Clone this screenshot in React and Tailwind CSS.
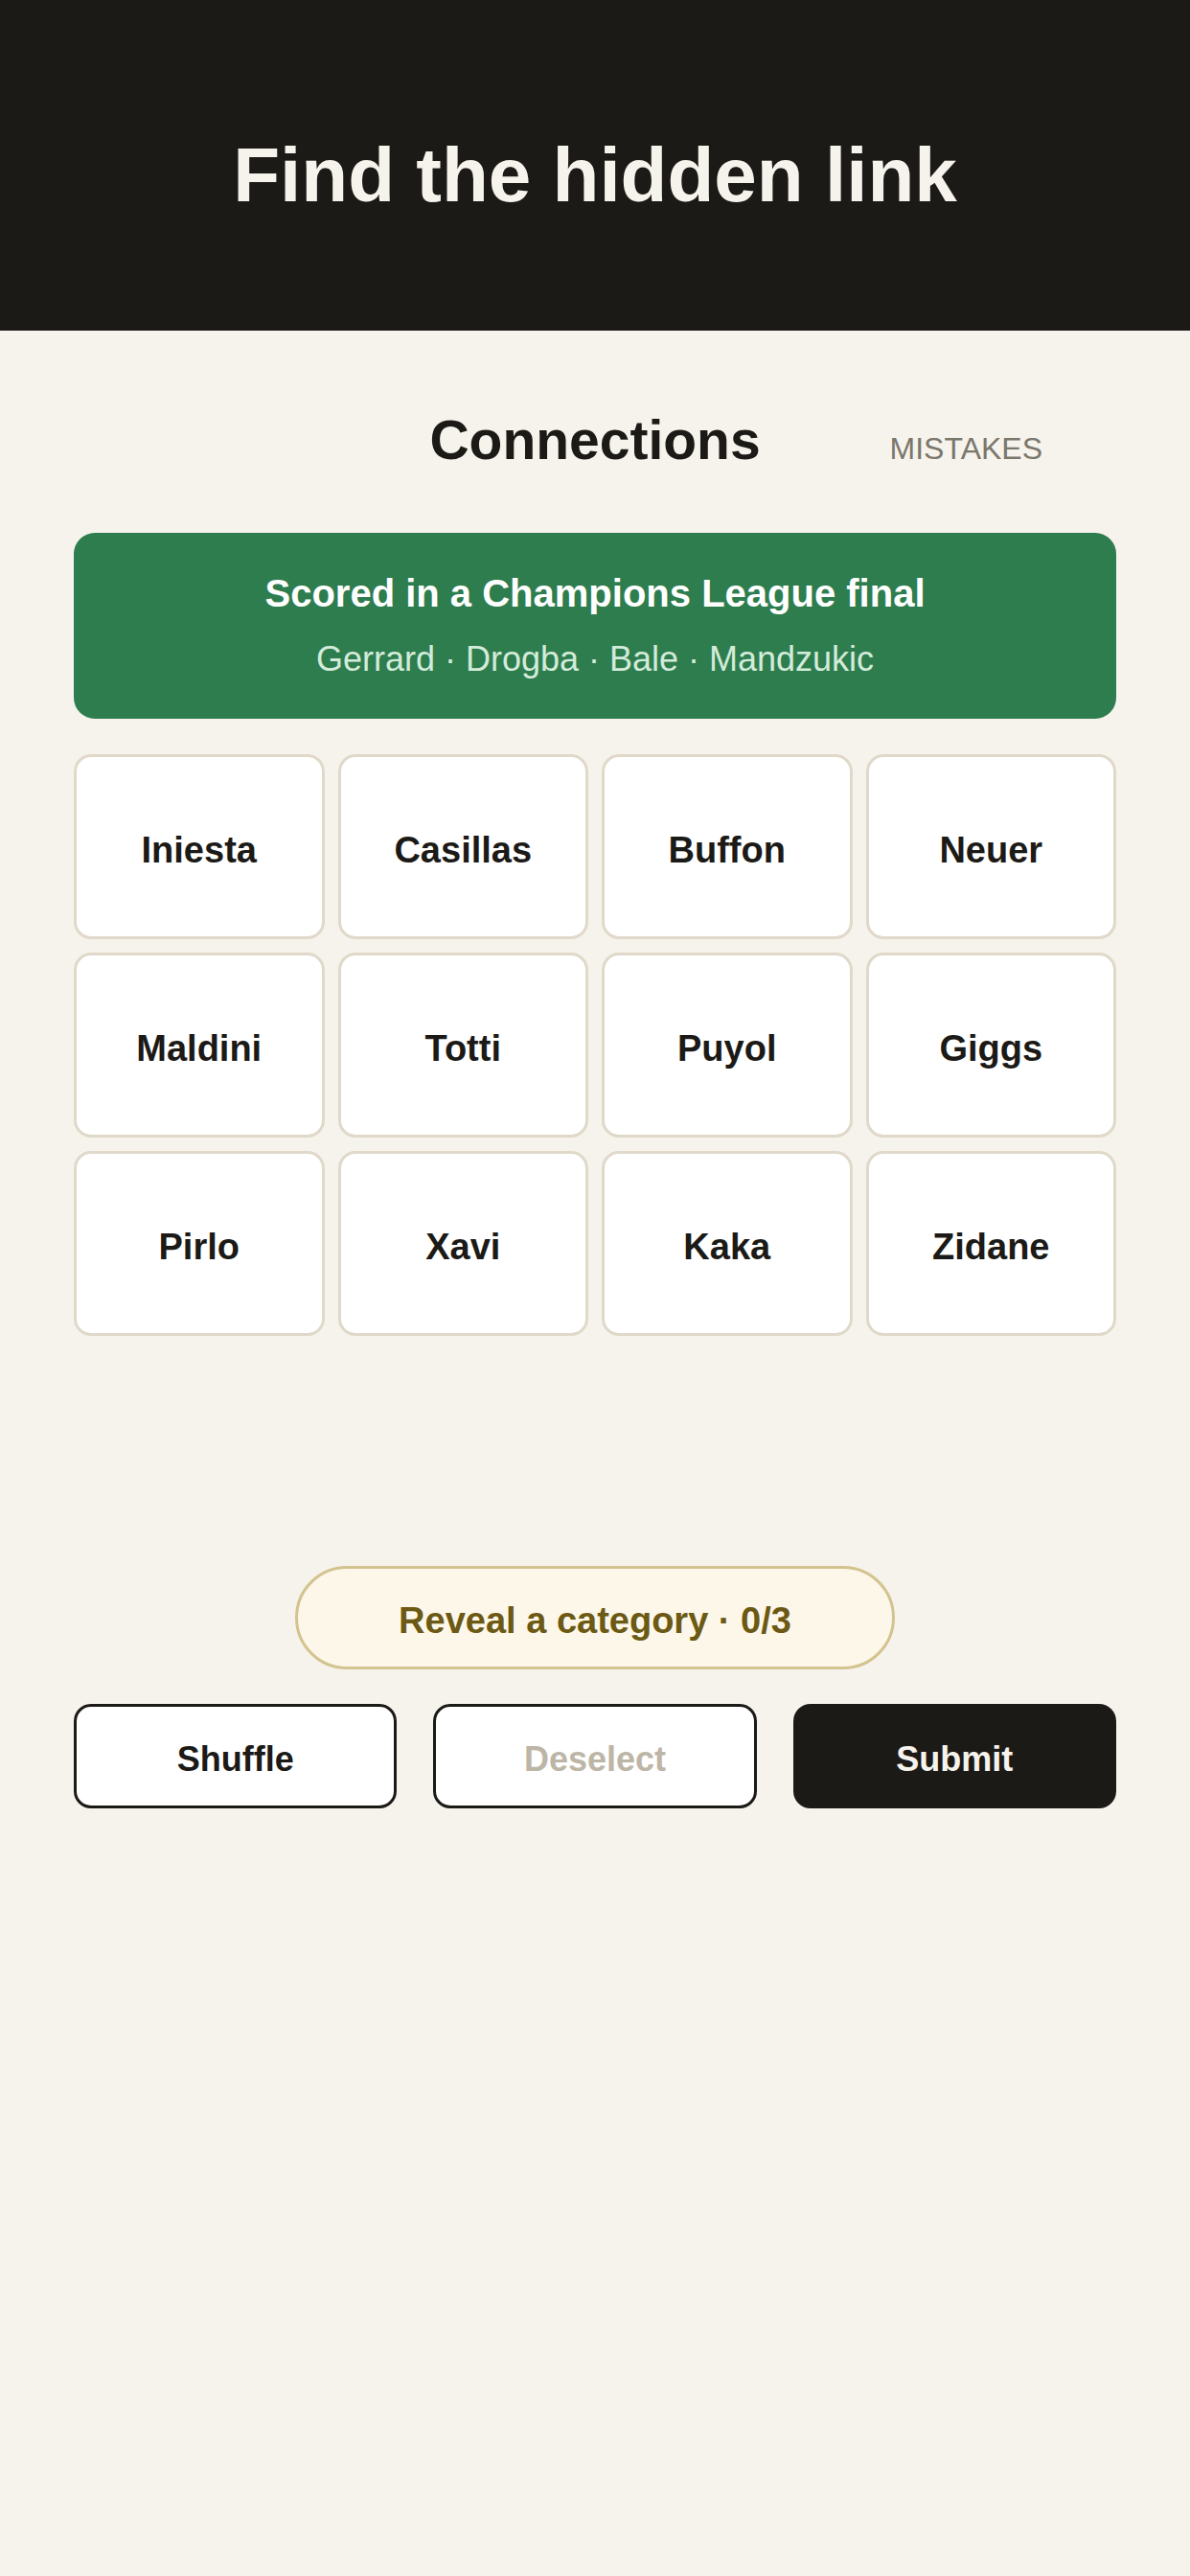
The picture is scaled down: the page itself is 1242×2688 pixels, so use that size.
import { useState } from 'react';

const WORDS = [
  'Iniesta', 'Casillas', 'Buffon', 'Neuer',
  'Maldini', 'Totti', 'Puyol', 'Giggs',
  'Pirlo', 'Xavi', 'Kaka', 'Zidane',
];

const font = { fontFamily: '"Liberation Sans", Arial, Helvetica, sans-serif' };

const App = () => {
  const [selected, setSelected] = useState([]);

  const toggle = (word) => {
    setSelected((prev) =>
      prev.includes(word) ? prev.filter((w) => w !== word) : prev.length < 4 ? [...prev, word] : prev
    );
  };

  return (
    <div className="min-h-[2688px] bg-[#f6f3ec] text-[#1c1a17]" style={font}>
      {/* Hero */}
      <header className="h-[345px] bg-[#1c1a17] pt-[143px] text-center">
        <h1 className="text-[80px] leading-none font-bold text-[#f6f3ec]">Find the hidden link</h1>
      </header>

      <main className="px-[77px]">
        {/* Title row */}
        <div className="grid grid-cols-[1fr_auto_1fr] items-baseline pt-[86px]">
          <div />
          <h2 className="text-[57px] leading-none font-bold">Connections</h2>
          <div className="justify-self-end pr-[77px] text-[32px] leading-none text-[#7a776c]">MISTAKES</div>
        </div>

        {/* Solved group */}
        <div className="mt-[68px] rounded-[22px] bg-[#2e7d4f] pt-[43px] pb-[44px] text-center">
          <p className="text-[40px] leading-none font-bold text-white">Scored in a Champions League final</p>
          <p className="mt-[31px] text-[36px] leading-none text-[#d3ebd9]">
            Gerrard · Drogba · Bale · Mandzukic
          </p>
        </div>

        {/* Word grid */}
        <div className="mt-[37px] grid grid-cols-4 gap-[14px]">
          {WORDS.map((word) => (
            <button
              key={word}
              onClick={() => toggle(word)}
              className={`h-[193px] rounded-[18px] border-[3px] pt-[8px] text-[38px] font-bold ${
                selected.includes(word)
                  ? 'border-[#1c1a17] bg-[#1c1a17] text-[#f6f3ec]'
                  : 'border-[#e0d9ca] bg-white text-[#1c1a17]'
              }`}
            >
              {word}
            </button>
          ))}
        </div>

        {/* Hint */}
        <div className="mt-[240px] flex justify-center">
          <button className="h-[108px] w-[626px] rounded-full border-[3px] border-[#d3c38f] bg-[#fdf7ea] pt-[6px] text-[38px] font-bold text-[#6b5914]">
            Reveal a category · 0/3
          </button>
        </div>

        {/* Actions */}
        <div className="mt-[36px] grid grid-cols-3 gap-[38px]">
          <button className="h-[109px] rounded-[18px] border-[3px] border-[#1c1a17] bg-white pt-[6px] text-[36px] font-bold">
            Shuffle
          </button>
          <button
            onClick={() => setSelected([])}
            className="h-[109px] rounded-[18px] border-[3px] border-[#1c1a17] bg-white pt-[6px] text-[36px] font-bold text-[#bdb6a7]"
          >
            Deselect
          </button>
          <button className="h-[109px] rounded-[18px] bg-[#1c1a17] pt-[6px] text-[36px] font-bold text-[#f6f3ec]">
            Submit
          </button>
        </div>
      </main>
    </div>
  );
};

export default App;
